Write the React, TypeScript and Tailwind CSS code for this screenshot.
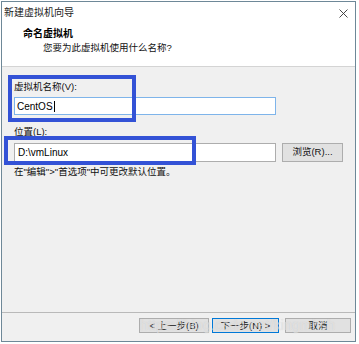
import React from 'react'

const font = 'font-["Liberation_Sans","Noto_Sans_CJK_SC",sans-serif]'

function CloseIcon() {
  return (
    <svg width="9" height="9" viewBox="0 0 9 9" className="text-[#333]">
      <path d="M0.5 0.5 L8.5 8.5 M8.5 0.5 L0.5 8.5" stroke="currentColor" strokeWidth="0.9" fill="none" />
    </svg>
  )
}

function Button({ label, width, focused }: { label: string; width: string; focused?: boolean }) {
  return (
    <div
      className={`${width} h-[15px] flex items-center justify-center text-[9.5px] leading-none text-[#111] ${
        focused ? 'border border-[#0078d7] bg-[#e1e1e1]' : 'border border-[#adadad] bg-[#e1e1e1]'
      }`}
    >
      {label}
    </div>
  )
}

export default function App() {
  return (
    <div className={`relative w-[359px] h-[344px] bg-white overflow-hidden ${font}`}>
      <div className="ml-px mt-px w-[355px] h-[341px] border border-[#6e8898] flex flex-col bg-[#f0f0f0]">
        {/* title bar */}
        <div className="h-[22px] bg-white flex items-center justify-between pl-[2px] pr-[7px]">
          <span className="text-[10px] text-[#222] leading-none">新建虚拟机向导</span>
          <CloseIcon />
        </div>

        {/* wizard header */}
        <div className="h-[42px] bg-white pt-[4px] pl-[21px]">
          <div className="text-[10px] leading-[11px] font-bold text-black">命名虚拟机</div>
          <div className="mt-[3px] pl-[20px] text-[9.5px] leading-[11px] text-[#111]">您要为此虚拟机使用什么名称?</div>
        </div>
        <div className="h-px bg-[#d4d4d4]" />

        {/* body */}
        <div className="flex-1 pl-[12px] pt-[14px] flex flex-col text-[9.5px] text-[#111]">
          <div className="leading-[12px]">虚拟机名称(V):</div>
          <div className="mt-[4px] w-[262px] h-[18px] bg-white border border-[#7eb4ea] flex items-center pl-[2px] text-[10px] text-black">
            CentOS
            <span className="ml-px w-px h-[11px] bg-black" />
          </div>

          <div className="mt-[11px] leading-[12px]">位置(L):</div>
          <div className="mt-[5px] flex items-center">
            <div className="w-[262px] h-[19px] bg-white border border-[#adadad] flex items-center pl-[3px] text-[10px] text-black">
              D:\vmLinux
            </div>
            <div className="ml-[6px] w-[61px] h-[19px] bg-[#e1e1e1] border border-[#adadad] flex items-center justify-center text-[9.5px]">
              浏览(R)...
            </div>
          </div>
          <div className="mt-[4px] leading-[12px]">在"编辑"&gt;"首选项"中可更改默认位置。</div>
        </div>

        {/* footer */}
        <div className="h-[29px] border-t border-[#b9b9b9] pt-[5px] pr-[4px] flex justify-end">
          <Button label="< 上一步(B)" width="w-[70px]" />
          <div className="ml-[3px]">
            <Button label="下一步(N) >" width="w-[67px]" focused />
          </div>
          <div className="ml-[6px]">
            <Button label="取消" width="w-[66px]" />
          </div>
        </div>
      </div>

      {/* annotation boxes */}
      <div className="absolute left-[8px] top-[75px] w-[128px] h-[47px] border-4 border-[#3352d6]" />
      <div className="absolute left-[4px] top-[136px] w-[192px] h-[29px] border-4 border-[#3352d6]" />

      {/* watermark */}
      <div className="absolute left-[140px] top-[317px] text-[14px] leading-[16px] text-white/40 [text-shadow:0_0_1px_rgba(180,180,180,0.6)] tracking-[0.2px]">
        https://blog.csdn.net/kingmhsh
      </div>
    </div>
  )
}
